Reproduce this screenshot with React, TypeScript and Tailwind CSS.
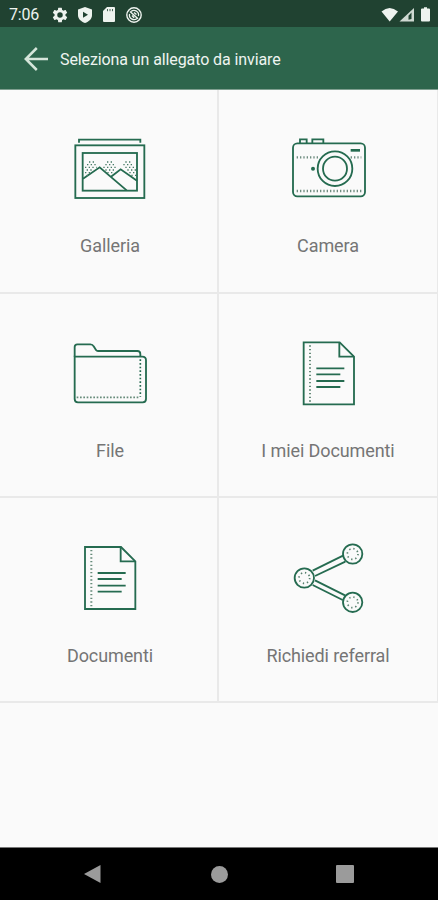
import type { ReactNode } from 'react'

function StatusBar() {
  return (
    <div className="flex h-[27px] shrink-0 items-center bg-[#204231] pt-0.5 pl-[9px] text-[#eef3ef]">
      <span className="w-[31px] text-[16px] leading-[24px] tracking-[-0.2px] whitespace-nowrap">7:06</span>
      <svg className="ml-3 h-4 w-4" viewBox="1.500 1.500 21 21" fill="currentColor">
        <path d="M19.14 12.94c.04-.3.06-.61.06-.94s-.02-.64-.07-.94l2.03-1.58a.5.5 0 0 0 .12-.61l-1.92-3.32a.49.49 0 0 0-.59-.22l-2.39.96a7 7 0 0 0-1.62-.94l-.36-2.54a.48.48 0 0 0-.48-.41h-3.84a.47.47 0 0 0-.47.41l-.36 2.54c-.59.24-1.13.57-1.62.94l-2.39-.96a.48.48 0 0 0-.59.22L2.74 8.87a.47.47 0 0 0 .12.61l2.03 1.58a6.5 6.5 0 0 0 0 1.88l-2.03 1.58a.5.5 0 0 0-.12.61l1.92 3.32c.12.22.37.29.59.22l2.39-.96c.5.38 1.03.7 1.62.94l.36 2.54c.05.24.24.41.48.41h3.84c.24 0 .44-.17.47-.41l.36-2.54a7 7 0 0 0 1.62-.94l2.39.96c.22.08.47 0 .59-.22l1.92-3.32a.47.47 0 0 0-.12-.61zM12 15.6a3.6 3.6 0 1 1 0-7.2 3.6 3.6 0 0 1 0 7.2z" />
      </svg>
      <svg className="ml-[9px] h-4 w-4" viewBox="0 0 16 16">
        <path d="M8 0 15 2.500v5.500c0 4-3 6.500-7 8-4-1.500-7-4-7-8V2.500z" fill="currentColor" />
        <path d="M6 4.800v6L11 7.800z" fill="#204231" />
      </svg>
      <svg className="ml-[10px] h-[15px] w-3" viewBox="0 0 12 15">
        <path d="M4 0h7a1 1 0 0 1 1 1v13a1 1 0 0 1-1 1H1a1 1 0 0 1-1-1V4z" fill="currentColor" />
        <path d="M4.500 2v2.200M7 2v2.200M9.500 2v2.200" stroke="#204231" strokeWidth=".8" />
      </svg>
      <svg className="ml-[11px] h-4 w-4" viewBox="0 0 16 16" fill="none" stroke="currentColor">
        <circle cx="8" cy="8" r="7.200" strokeWidth="1.400" />
        <path d="M5 4.500a4.600 4.600 0 0 1 7.400 4.700M11 11.500a4.600 4.600 0 0 1-7.400-4.700" strokeWidth="1.300" />
        <path d="M4 4.500 12 11.800M6 8.500l2.200 2.200M8 5.500l2.500 2" strokeWidth="1.500" />
      </svg>
      <svg className="mr-[7px] ml-auto h-4 w-[50px]" viewBox="0 0 50 16" fill="currentColor">
        <path d="M.5 4.500Q8.500-2.500 17 4.500L8.700 14.500z" />
        <path d="M33 1v13.500H18.500z" fillOpacity=".85" />
        <path d="M30.500 5.500v6.500l-3 .8V8.800z" fill="#204231" />
        <path d="M41 1.500h2V.3h3v1.200h2q1 0 1 1v11q0 1-1 1h-7q-1 0-1-1v-11q0-1 1-1z" />
      </svg>
    </div>
  )
}

function Header() {
  return (
    <header className="flex h-[63px] shrink-0 items-center border-b border-[#7f9f90] bg-[#2d654c] pt-[3px] pl-6">
      <svg className="mb-0.5 h-6 w-6" viewBox="0 0 24 24" fill="none" stroke="#d5e5da" strokeWidth="2.500">
        <path d="M24 12H2M12.800 1 1.800 12l11 11" />
      </svg>
      <h1 className="ml-[12px] text-[16px] leading-6 tracking-[-0.1px] whitespace-nowrap text-[#eef4f0]">
        Seleziona un allegato da inviare
      </h1>
    </header>
  )
}

function GalleryIcon() {
  return (
    <g>
      <path d="M57 53V44H241V53" />
      <rect x="46" y="61" width="207" height="158" />
      <rect x="68" y="84" width="163" height="113" />
      <path d="M69 161 119 127 200 196M153 155 182 133 231 167" />
      <g stroke="#467a65" strokeWidth="4" strokeDasharray="4 7">
        <path d="M87 111H108M141 111H160M196 111H216" />
        <path d="M81 119H112M136 119H168M190 119H222" />
        <path d="M75 127H110M130 127H174M196 127H230" />
        <path d="M80 135H102M136 135H169M202 135H230" />
        <path d="M75 143H94M142 143H160M208 143H230" />
        <path d="M80 151H84M214 151H230" />
      </g>
    </g>
  )
}

function CameraIcon() {
  return (
    <g>
      <rect x="39" y="55" width="216" height="159" rx="13" />
      <path d="M60 54V43H80V54M97 54V43H130V54" />
      <circle cx="165" cy="131" r="52" />
      <circle cx="165" cy="131" r="36" />
      <path d="M212 76H240" strokeWidth="8" />
      <circle cx="99" cy="131" r="6" fill="#256b50" stroke="none" />
      <path d="M50 97H117M212 97H244M50 198H246" stroke="#6f8d80" strokeWidth="7" strokeDasharray="4 6" />
    </g>
  )
}

function FolderIcon() {
  return (
    <g>
      <path d="M44 80V51Q44 43 52 43H91Q98 43 101 49L108 60Q110 63 114 63H232Q241 63 241 72V80" />
      <path d="M44 80H247Q258 80 258 91V207Q258 217 248 217H54Q44 217 44 207Z" />
      <path d="M241 88V200" strokeWidth="5" strokeDasharray="5 6" />
      <path d="M50 202H240" stroke="#668b7a" strokeWidth="5" strokeDasharray="5 5" />
    </g>
  )
}

function DocumentIcon() {
  return (
    <g>
      <path d="M71 37H179L222 80V223H71Z" />
      <path d="M178 38V80H221" />
      <path d="M90 46V217" stroke="#668b7a" strokeWidth="6" strokeDasharray="4 7" />
      <path d="M109 115H193M109 133H181M109 153H193M109 171H181" />
    </g>
  )
}

function ShareIcon() {
  return (
    <g>
      <path d="M98 107 189 62M105 123 196 80M105 136 195 181M98 150 188 195" />
      <circle cx="73" cy="129" r="29" />
      <circle cx="218" cy="57" r="29" />
      <circle cx="218" cy="202" r="29" />
      <g stroke="#58806e" strokeWidth="5" strokeDasharray="4 8.570">
        <circle cx="73" cy="129" r="16" />
        <circle cx="218" cy="57" r="16" />
        <circle cx="218" cy="202" r="16" />
      </g>
    </g>
  )
}

type CellProps = { label: string; right?: boolean; children: ReactNode }

function Cell({ label, right, children }: CellProps) {
  return (
    <button
      className={
        right
          ? 'flex flex-col items-center justify-end border-r border-b-2 border-[#e9e9e9] pb-[33px]'
          : 'flex flex-col items-center justify-end border-r-2 border-b-2 border-[#e9e9e9] pb-[33px] pl-[3px]'
      }
    >
      <svg
        className="h-[85px] w-[100px]"
        viewBox={right ? '-6 0 300 255' : '0 0 300 255'}
        fill="none"
        stroke="#256b50"
        strokeWidth="5.500"
      >
        {children}
      </svg>
      <span className="mt-[24px] text-[18px] leading-6 tracking-[-0.1px] whitespace-nowrap text-[#757575]">
        {label}
      </span>
    </button>
  )
}

function NavBar() {
  return (
    <nav className="flex h-[53px] shrink-0 items-center border-t border-[#777] bg-black pl-[84px]">
      <svg className="h-[18px] w-[17px]" viewBox="0 0 17 18" fill="#9b9b9b">
        <path d="M16.500 0V18L0 9z" />
      </svg>
      <div className="ml-[110px] h-[17px] w-[17px] rounded-full bg-[#9b9b9b]" />
      <div className="ml-[108px] h-[18px] w-[18px] rounded-[1px] bg-[#9b9b9b]" />
    </nav>
  )
}

export default function App() {
  return (
    <div className="flex h-[900px] w-[438px] flex-col overflow-hidden bg-[#fafafa] font-['Roboto',sans-serif]">
      <StatusBar />
      <Header />
      <main className="grid flex-1 grid-cols-[219px_219px] grid-rows-[204px_204px_205px] content-start [&>*:nth-child(-n+2)]:pb-[34px]">
        <Cell label="Galleria"><GalleryIcon /></Cell>
        <Cell label="Camera" right><CameraIcon /></Cell>
        <Cell label="File"><FolderIcon /></Cell>
        <Cell label="I miei Documenti" right><DocumentIcon /></Cell>
        <Cell label="Documenti">
          <g transform="translate(4 -1)"><DocumentIcon /></g>
        </Cell>
        <Cell label="Richiedi referral" right><ShareIcon /></Cell>
      </main>
      <NavBar />
    </div>
  )
}
